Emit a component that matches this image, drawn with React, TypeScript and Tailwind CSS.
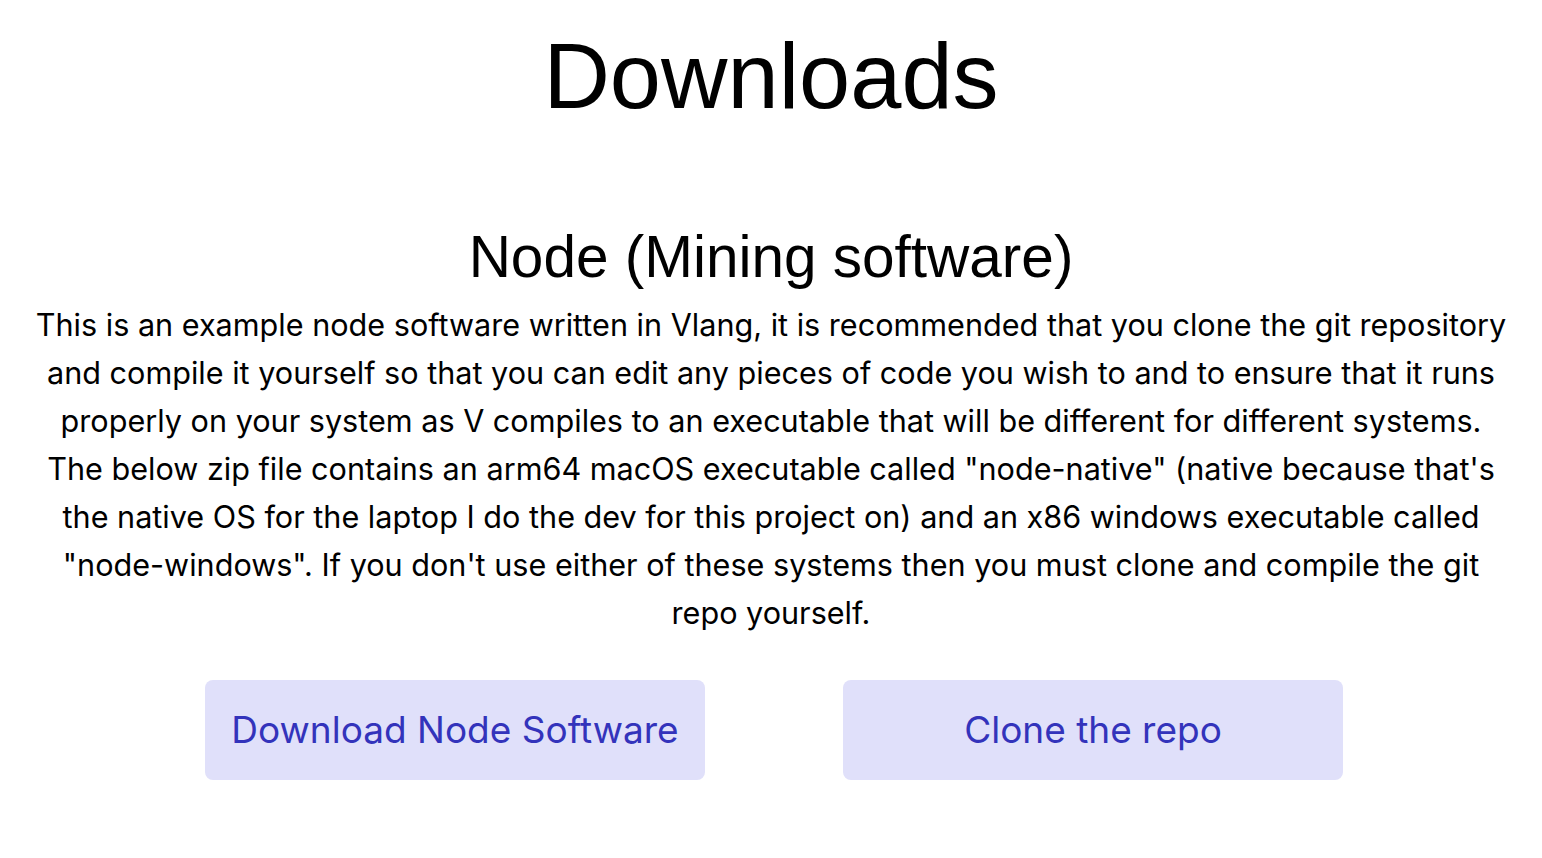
export default function App() {
    return (
        <div className="min-h-screen bg-white text-black flex flex-col items-center" style={{ fontFamily: "Inter, 'Liberation Sans', sans-serif" }}>
            <h1 className="text-[92px] leading-none mt-[30px] font-['Liberation_Sans',sans-serif]">Downloads</h1>

            <section className="flex flex-col items-center mt-[106px] w-full px-[28px]">
                <h2 className="text-[58.5px] leading-none font-['Liberation_Sans',sans-serif]">Node (Mining software)</h2>
                <p className="text-[30.6px] leading-[48px] text-center mt-[14px] max-w-[1474px]">
                    This is an example node software written in Vlang, it is recommended that you clone the git repository and compile it yourself so that you can edit any pieces of code you wish to and to ensure that it runs properly on your system as V compiles to an executable that will be different for different systems. The below zip file contains an arm64 macOS executable called "node-native" (native because that's the native OS for the laptop I do the dev for this project on) and an x86 windows executable called "node-windows". If you don't use either of these systems then you must clone and compile the git repo yourself.
                </p>
                <div className="flex gap-[138px] mt-[43px] ml-[6px]">
                    <button className="w-[500px] h-[100px] rounded-lg bg-[#e0e0fa] text-[#3333bb] text-[37px]">Download Node Software</button>
                    <button className="w-[500px] h-[100px] rounded-lg bg-[#e0e0fa] text-[#3333bb] text-[37px]">Clone the repo</button>
                </div>
            </section>
        </div>
    );
}
